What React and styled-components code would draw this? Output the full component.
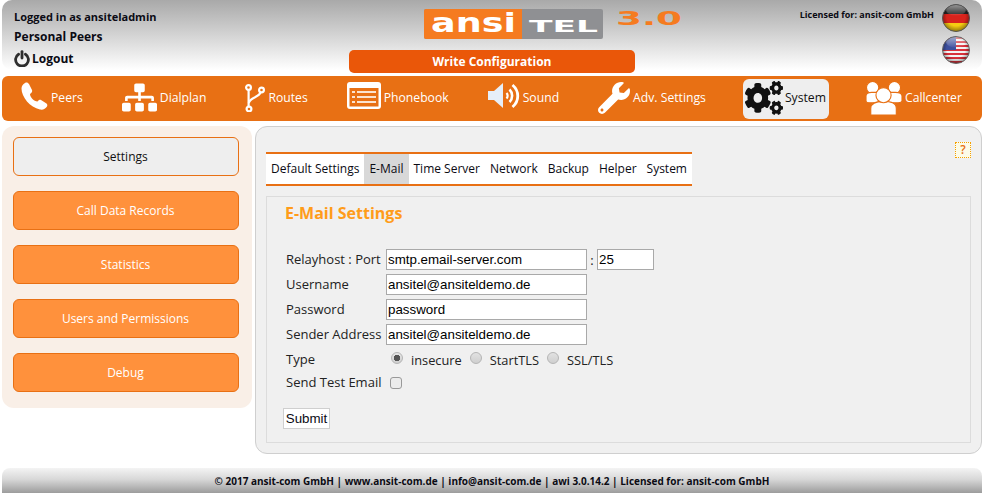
import React from 'react';
import styled, { createGlobalStyle } from 'styled-components';
import { FaSitemap, FaWrench, FaCogs } from 'react-icons/fa';

const ORANGE = '#e87014';
const SANS = `'Open Sans', 'Noto Sans', sans-serif`;
const ARIAL = `'Liberation Sans', Arial, sans-serif`;

const GlobalStyle = createGlobalStyle`
  html, body {
    margin: 0;
    padding: 0;
    height: 493px;
    overflow: hidden;
    background: #fff;
    font-family: ${SANS};
  }
`;

const Page = styled.div`
  width: 980px;
  height: 493px;
  margin-left: 2px;
  display: flex;
  flex-direction: column;
`;

const Header = styled.header`
  height: 70px;
  flex: none;
  display: grid;
  grid-template-columns: 347px 286px 1fr;
  border-radius: 10px;
  background: linear-gradient(#a9a9a9 0%, #cfcfcf 45%, #ffffff 100%);
`;

const UserInfo = styled.div`
  padding: 9px 0 0 12px;
  color: #0b0b14;
  font-weight: 700;
  display: flex;
  flex-direction: column;
`;

const LoggedIn = styled.div`
  font-size: 11px;
  line-height: 16px;
`;

const PersonalPeers = styled.div`
  font-size: 12px;
  line-height: 16px;
  margin-top: 4px;
`;

const LogoutRow = styled.div`
  display: flex;
  align-items: center;
  gap: 2px;
  font-size: 12px;
  line-height: 16px;
  margin-top: 5px;
`;

const Center = styled.div`
  display: flex;
  flex-direction: column;
`;

const LogoSvg = styled.svg`
  display: block;
  margin-left: 75px;
  flex: none;
  overflow: visible;
`;

const WriteButton = styled.button`
  height: 23px;
  margin-top: 10px;
  flex: none;
  border: none;
  border-radius: 5px;
  background: #ea5709;
  color: #fff;
  font-family: ${SANS};
  font-weight: 700;
  font-size: 12px;
  padding: 0;
`;

const LicenseCol = styled.div`
  display: flex;
  justify-content: flex-end;
  gap: 8px;
  padding: 4px 12px 0 0;
`;

const Licensed = styled.div`
  font-size: 9px;
  font-weight: 700;
  color: #0b0b14;
  line-height: 22px;
`;

const Flags = styled.div`
  display: flex;
  flex-direction: column;
  gap: 4px;
`;

const Nav = styled.nav`
  height: 45px;
  flex: none;
  margin-top: 6px;
  display: flex;
  align-items: center;
  gap: 35px;
  padding-left: 16px;
  border-radius: 6px;
  background: ${ORANGE};
`;

const NavItem = styled.div`
  display: flex;
  align-items: center;
  gap: ${(p) => (p.$active ? 2 : 3)}px;
  height: 40px;
  box-sizing: border-box;
  padding: 0 ${(p) => (p.$active ? 3 : 2)}px 2px 2px;
  border-radius: 6px;
  font-size: 12.2px;
  color: ${(p) => (p.$active ? '#111' : '#fff')};
  background: ${(p) => (p.$active ? '#eeeeee' : 'transparent')};
  svg {
    flex: none;
    display: block;
  }
`;

const LiftedSvg = styled.svg`
  margin-bottom: 4px;
`;

const GearsIcon = styled(FaCogs)`
  width: 38px;
  height: 34px;
  color: #111;
`;

const Body = styled.div`
  flex: none;
  margin-top: 5px;
  display: flex;
  align-items: flex-start;
  gap: 3px;
`;

const Sidebar = styled.aside`
  width: 250px;
  height: 282px;
  box-sizing: border-box;
  padding: 11px 13px 0 11px;
  display: flex;
  flex-direction: column;
  gap: 15px;
  border-radius: 12px;
  background: #f9efe7;
`;

const SideButton = styled.div`
  height: 39px;
  box-sizing: border-box;
  display: flex;
  align-items: center;
  justify-content: center;
  padding-right: 1px;
  border: 1px solid ${ORANGE};
  border-radius: 6px;
  font-size: 12px;
  color: ${(p) => (p.$active ? '#111' : '#fff')};
  background: ${(p) => (p.$active ? '#eeeeee' : '#ff913c')};
`;

const Main = styled.main`
  position: relative;
  width: 727px;
  height: 328px;
  box-sizing: border-box;
  padding: 25px 10px 10px 10px;
  border: 1px solid #cfcfcf;
  border-radius: 12px;
  background: #f0f0f0;
`;

const Help = styled.div`
  position: absolute;
  top: 15px;
  right: 10px;
  width: 16px;
  height: 16px;
  box-sizing: border-box;
  border: 1px dotted #f5a000;
  background: #fcfbe8;
  color: ${ORANGE};
  font-size: 12px;
  font-weight: 600;
  line-height: 14px;
  text-align: center;
`;

const Tabs = styled.div`
  width: max-content;
  display: flex;
  height: 34px;
  box-sizing: border-box;
  border-top: 2px solid ${ORANGE};
  border-bottom: 2px solid ${ORANGE};
  background: #fff;
`;

const Tab = styled.div`
  padding: 0 5px;
  font-size: 12px;
  line-height: 29px;
  color: #0b0b14;
  background: ${(p) => (p.$active ? '#d8d8d8' : 'transparent')};
`;

const Box = styled.section`
  margin-top: 10px;
  height: 247px;
  box-sizing: border-box;
  padding: 0 0 0 19px;
  border: 1px solid #dcdcdc;
`;

const Title = styled.h2`
  margin: 5px 0 0 -1px;
  font-size: 16px;
  line-height: 22px;
  font-weight: 700;
  color: #ff9c1a;
`;

const Form = styled.form`
  margin-top: 25px;
  display: flex;
  flex-direction: column;
  gap: 4px;
`;

const Row = styled.div`
  display: flex;
  align-items: center;
  height: 21px;
`;

const Label = styled.label`
  width: 100px;
  flex: none;
  padding-bottom: 2px;
  font-size: 13px;
  color: #222;
  white-space: nowrap;
`;

const TextInput = styled.input`
  width: ${(p) => p.$w}px;
  height: 21px;
  box-sizing: border-box;
  padding: 0 1px;
  border: 1px solid #a9a9a9;
  background: #fff;
  font-family: ${ARIAL};
  font-size: 13.33px;
  color: #000;
  outline: none;
`;

const Colon = styled.span`
  width: 10px;
  text-align: center;
  font-size: 13px;
  color: #222;
`;

const TypeRow = styled(Row)`
  height: 19px;
  ${Label} {
    padding-bottom: 0;
  }
`;

const Radio = styled.input`
  appearance: none;
  width: 12px;
  height: 12px;
  margin: 0 8px 1px ${(p) => p.$ml}px;
  flex: none;
  border: 1px solid #b5b5b5;
  border-radius: 50%;
  background: ${(p) =>
    p.defaultChecked
      ? 'radial-gradient(circle, #555 0 3px, transparent 3.5px), linear-gradient(#e6e6e6, #cfcfcf)'
      : 'linear-gradient(#e2e2e2, #cfcfcf)'};
`;

const RadioLabel = styled.span`
  padding-top: 2px;
  font-size: 12.8px;
  color: #222;
`;

const Check = styled.input`
  appearance: none;
  width: 12px;
  height: 12px;
  margin: 0 0 0 4px;
  border: 1px solid #999;
  border-radius: 3px;
  background: #ececec;
`;

const Submit = styled.button`
  display: block;
  margin: 11px 0 0 -3px;
  width: 47px;
  height: 21px;
  padding: 0;
  box-sizing: border-box;
  border: 1px solid #cfcfcf;
  background: #fff;
  font-family: ${ARIAL};
  font-size: 13.33px;
  color: #0b0b14;
`;

const Footer = styled.footer`
  height: 25px;
  flex: none;
  margin-top: 14px;
  display: flex;
  align-items: center;
  justify-content: center;
  border-radius: 8px 8px 0 0;
  background: linear-gradient(#f4f4f4 0%, #d8d8d8 45%, #9c9c9c 100%);
  font-size: 10px;
  font-weight: 700;
  color: #0b0b14;
`;

const Logo = () => (
  <LogoSvg width="260" height="40" viewBox="0 0 260 40">
    <rect x="0" y="9" width="179" height="30" rx="2" fill="#8f9093" />
    <path d="M2 9H98V39H2a2 2 0 0 1-2-2V11a2 2 0 0 1 2-2Z" fill="#f57b20" />
    <text x="7" y="32" fontFamily="'DejaVu Sans', sans-serif" fontWeight="700" fontSize="27" fill="#fff" textLength="85" lengthAdjust="spacingAndGlyphs">ansi</text>
    <text x="105" y="32" fontFamily="'DejaVu Sans', sans-serif" fontWeight="700" fontSize="16" fill="#fff" textLength="69" lengthAdjust="spacingAndGlyphs">TEL</text>
    <text x="192" y="25" fontFamily="'DejaVu Sans', sans-serif" fontWeight="700" fontSize="19" fill="#f57b20" textLength="66" lengthAdjust="spacingAndGlyphs">3.0</text>
  </LogoSvg>
);

const PowerIcon = () => (
  <svg width="16" height="17" viewBox="0 0 16 17" fill="none" stroke="#2e2e2e" strokeWidth="2.8" strokeLinecap="round">
    <path d="M4.6 4.2A6.4 6.4 0 1 0 11.4 4.2" />
    <path d="M8 1.6V8" />
  </svg>
);

const GermanFlag = () => (
  <svg width="28" height="28" viewBox="0 0 28 28">
    <defs>
      <clipPath id="round"><circle cx="14" cy="14" r="13.5" /></clipPath>
      <radialGradient id="shade" cx="50%" cy="45%" r="55%">
        <stop offset="60%" stopColor="#000" stopOpacity="0" />
        <stop offset="100%" stopColor="#000" stopOpacity="0.45" />
      </radialGradient>
      <linearGradient id="gloss" x1="0" y1="0" x2="0" y2="1">
        <stop offset="0%" stopColor="#fff" stopOpacity="0.55" />
        <stop offset="100%" stopColor="#fff" stopOpacity="0.05" />
      </linearGradient>
    </defs>
    <g clipPath="url(#round)">
      <rect width="28" height="10" fill="#222" />
      <rect y="10" width="28" height="9" fill="#d8231c" />
      <rect y="19" width="28" height="9" fill="#f5cb12" />
      <circle cx="14" cy="14" r="14" fill="url(#shade)" />
      <ellipse cx="14" cy="6" rx="10" ry="5.5" fill="url(#gloss)" />
    </g>
    <circle cx="14" cy="14" r="13.5" fill="none" stroke="#555" strokeWidth="1" />
  </svg>
);

const UsFlag = () => (
  <svg width="28" height="28" viewBox="0 0 28 28">
    <g clipPath="url(#round)">
      <rect width="28" height="28" fill="#f3f3f3" />
      {[1, 5, 9, 13, 17, 21, 25].map((y) => (
        <rect key={y} y={y} width="28" height="2" fill="#d8303a" />
      ))}
      <rect width="14" height="14" fill="#3d4f9e" />
      <circle cx="14" cy="14" r="14" fill="url(#shade)" />
      <ellipse cx="14" cy="6" rx="10" ry="5.5" fill="url(#gloss)" />
    </g>
    <circle cx="14" cy="14" r="13.5" fill="none" stroke="#666" strokeWidth="1" />
  </svg>
);

const PhoneIcon = () => (
  <LiftedSvg width="28" height="28" viewBox="0 0 28 28" fill="#fff">
    <path d="M5 1C7 0 8 1 9 2L12 8C12.5 9.5 12 10.5 10 12C10 15 14 19.5 17.5 19.5C18.5 18 20 17.5 21 18L26.5 21.5C27.5 22.5 27.5 23.5 27 24.5C25.5 27 23 28 20 27.5C10 25.5 1.5 15 1.5 6.5C1.5 4 3 2 5 1Z" />
  </LiftedSvg>
);

const RoutesIcon = () => (
  <svg width="20" height="28" viewBox="0 0 20 28" fill="none" stroke="#fff" strokeWidth="2.2">
    <circle cx="3.5" cy="3.5" r="2.4" />
    <circle cx="16.5" cy="6" r="2.4" />
    <circle cx="4" cy="25" r="2.4" />
    <path d="M3.6 6V22.5" />
    <path d="M15.5 8.3C14.5 13.5 5 13 3.8 19" />
  </svg>
);

const PhonebookIcon = () => (
  <LiftedSvg width="34" height="27" viewBox="0 0 34 27">
    <rect width="34" height="27" rx="3" fill="#fff" />
    <rect x="2.5" y="6" width="29" height="18.5" fill={ORANGE} />
    <g fill="#fbe3cf">
      <rect x="5" y="9" width="3" height="2" />
      <rect x="5" y="14" width="3" height="2" />
      <rect x="5" y="19" width="3" height="2" />
      <rect x="10" y="9" width="19" height="2" />
      <rect x="10" y="14" width="19" height="2" />
      <rect x="10" y="19" width="19" height="2" />
    </g>
  </LiftedSvg>
);

const SoundIcon = () => (
  <LiftedSvg width="32" height="26" viewBox="0 0 32 26" fill="none" stroke="#fff">
    <path d="M0 8H6L15 0V25L6 17H0Z" fill="#e6eef8" stroke="none" />
    <path d="M18.5 10C20 11.5 20 14 18.5 15.5" strokeWidth="2.2" />
    <path d="M21.5 6.5C25 10 25 15.5 21.5 19" strokeWidth="2.6" />
    <path d="M24.5 2C31.5 8 31.5 18 24.5 24" strokeWidth="2.8" />
  </LiftedSvg>
);

const UsersIcon = () => (
  <svg width="36" height="36" viewBox="0 0 38 36" fill="#fff" stroke={ORANGE} strokeWidth="1.2">
    <circle cx="7" cy="7" r="6.5" />
    <circle cx="30" cy="7" r="6.5" />
    <path d="M0 16C0 13 3 12 6 12H31C35 12 38 13 38 16V21C38 23 36 23 34 23H4C2 23 0 23 0 21Z" />
    <path d="M5 36V29C5 23 11 21.5 18.5 21.5C26 21.5 32 23 32 29V36Z" />
    <circle cx="18.5" cy="15" r="8" />
  </svg>
);

const navItems = [
  { label: 'Peers', icon: <PhoneIcon /> },
  { label: 'Dialplan', icon: <FaSitemap size={35} color="#fff" /> },
  { label: 'Routes', icon: <RoutesIcon /> },
  { label: 'Phonebook', icon: <PhonebookIcon /> },
  { label: 'Sound', icon: <SoundIcon /> },
  { label: 'Adv. Settings', icon: <FaWrench size={32} color="#fff" /> },
  { label: 'System', icon: <GearsIcon preserveAspectRatio="none" />, active: true },
  { label: 'Callcenter', icon: <UsersIcon /> },
];

const sideItems = ['Settings', 'Call Data Records', 'Statistics', 'Users and Permissions', 'Debug'];
const tabs = ['Default Settings', 'E-Mail', 'Time Server', 'Network', 'Backup', 'Helper', 'System'];

const App = () => (
  <Page>
    <GlobalStyle />
    <Header>
      <UserInfo>
        <LoggedIn>Logged in as ansiteladmin</LoggedIn>
        <PersonalPeers>Personal Peers</PersonalPeers>
        <LogoutRow>
          <PowerIcon />
          Logout
        </LogoutRow>
      </UserInfo>
      <Center>
        <Logo />
        <WriteButton>Write Configuration</WriteButton>
      </Center>
      <LicenseCol>
        <Licensed>Licensed for: ansit-com GmbH</Licensed>
        <Flags>
          <GermanFlag />
          <UsFlag />
        </Flags>
      </LicenseCol>
    </Header>

    <Nav>
      {navItems.map((item) => (
        <NavItem key={item.label} $active={item.active}>
          {item.icon}
          {item.label}
        </NavItem>
      ))}
    </Nav>

    <Body>
      <Sidebar>
        {sideItems.map((s, i) => (
          <SideButton key={s} $active={i === 0}>{s}</SideButton>
        ))}
      </Sidebar>
      <Main>
        <Help>?</Help>
        <Tabs>
          {tabs.map((t) => (
            <Tab key={t} $active={t === 'E-Mail'}>{t}</Tab>
          ))}
        </Tabs>
        <Box>
          <Title>E-Mail Settings</Title>
          <Form>
            <Row>
              <Label>Relayhost : Port</Label>
              <TextInput $w={201} defaultValue="smtp.email-server.com" />
              <Colon>:</Colon>
              <TextInput $w={57} defaultValue="25" />
            </Row>
            <Row>
              <Label>Username</Label>
              <TextInput $w={201} defaultValue="ansitel@ansiteldemo.de" />
            </Row>
            <Row>
              <Label>Password</Label>
              <TextInput $w={201} defaultValue="password" />
            </Row>
            <Row>
              <Label>Sender Address</Label>
              <TextInput $w={201} defaultValue="ansitel@ansiteldemo.de" />
            </Row>
            <TypeRow>
              <Label>Type</Label>
              <Radio type="radio" name="type" defaultChecked $ml={5} />
              <RadioLabel>insecure</RadioLabel>
              <Radio type="radio" name="type" $ml={8} />
              <RadioLabel>StartTLS</RadioLabel>
              <Radio type="radio" name="type" $ml={8} />
              <RadioLabel>SSL/TLS</RadioLabel>
            </TypeRow>
            <Row>
              <Label>Send Test Email</Label>
              <Check type="checkbox" />
            </Row>
            <Submit type="button">Submit</Submit>
          </Form>
        </Box>
      </Main>
    </Body>

    <Footer>© 2017 ansit-com GmbH | www.ansit-com.de | info@ansit-com.de | awi 3.0.14.2 | Licensed for: ansit-com GmbH</Footer>
  </Page>
);

export default App;
